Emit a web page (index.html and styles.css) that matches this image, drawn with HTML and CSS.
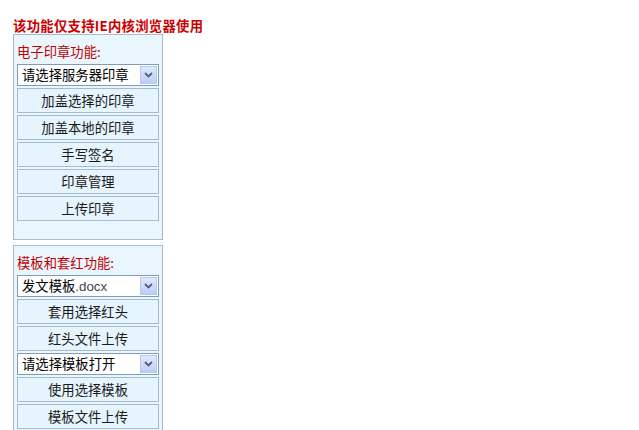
FILE: index.html
```html
<!DOCTYPE html>
<html lang="zh-CN">
<head>
<meta charset="utf-8">
<title>电子印章</title>
<link rel="stylesheet" href="styles.css">
</head>
<body>
<div class="page">
  <div class="title">该功能仅支持IE内核浏览器使用</div>

  <div class="panel panel-seal">
    <div class="label">电子印章功能:</div>
    <div class="select"><span class="select-text">请选择服务器印章</span><span class="arrow"><svg width="9" height="6" viewBox="0 0 9 6"><path d="M1 1 L4.5 4.5 L8 1" fill="none" stroke="#4d6185" stroke-width="1.8"/></svg></span></div>
    <div class="btn">加盖选择的印章</div>
    <div class="btn">加盖本地的印章</div>
    <div class="btn">手写签名</div>
    <div class="btn">印章管理</div>
    <div class="btn">上传印章</div>
  </div>

  <div class="panel panel-tpl">
    <div class="label">模板和套红功能:</div>
    <div class="select"><span class="select-text">发文模板<span class="ext">.docx</span></span><span class="arrow"><svg width="9" height="6" viewBox="0 0 9 6"><path d="M1 1 L4.5 4.5 L8 1" fill="none" stroke="#4d6185" stroke-width="1.8"/></svg></span></div>
    <div class="btn">套用选择红头</div>
    <div class="btn">红头文件上传</div>
    <div class="select"><span class="select-text">请选择模板打开</span><span class="arrow"><svg width="9" height="6" viewBox="0 0 9 6"><path d="M1 1 L4.5 4.5 L8 1" fill="none" stroke="#4d6185" stroke-width="1.8"/></svg></span></div>
    <div class="btn">使用选择模板</div>
    <div class="btn">模板文件上传</div>
  </div>
</div>
</body>
</html>
```
FILE: styles.css
```css
html, body {
  margin: 0;
  padding: 0;
  background: #ffffff;
}
body {
  font-family: "Noto Sans CJK SC", "Liberation Sans", sans-serif;
  font-size: 13.33px;
  color: #000;
}
.page {
  padding: 18px 0 0 13px;
}
.title {
  font-size: 13.33px;
  font-weight: bold;
  color: #cc0000;
  line-height: 16px;
  height: 16px;
  letter-spacing: 0.3px;
  white-space: nowrap;
}
.panel {
  width: 142px;
  border: 1px solid #a6bdd0;
  background: #e9f6fe;
  padding: 7px 3px 18px 3px;
  display: flex;
  flex-direction: column;
  gap: 2px;
}
.panel-tpl {
  margin-top: 5px;
  padding-bottom: 10px;
}
.label {
  color: #c00000;
  line-height: 20px;
  height: 20px;
  margin-bottom: 0;
  white-space: nowrap;
}
.select {
  height: 20px;
  border: 1px solid #7f9db9;
  background: #ffffff;
  display: flex;
  align-items: center;
  justify-content: space-between;
  padding: 0 1px 0 4px;
}
.select-text {
  line-height: 20px;
  white-space: nowrap;
}
.ext {
  font-family: "Liberation Sans", sans-serif;
  color: #444;
}
.arrow {
  width: 15px;
  height: 16px;
  border: 1px solid #b7c8ee;
  background: linear-gradient(#e0e9fd, #bccdf6);
  display: flex;
  align-items: center;
  justify-content: center;
}
.arrow svg {
  display: block;
}
.btn {
  height: 23px;
  border: 1px solid #a5bbcc;
  background: #e6f4fd;
  text-align: center;
  line-height: 23px;
  color: #1a1a1a;
  white-space: nowrap;
}
```
